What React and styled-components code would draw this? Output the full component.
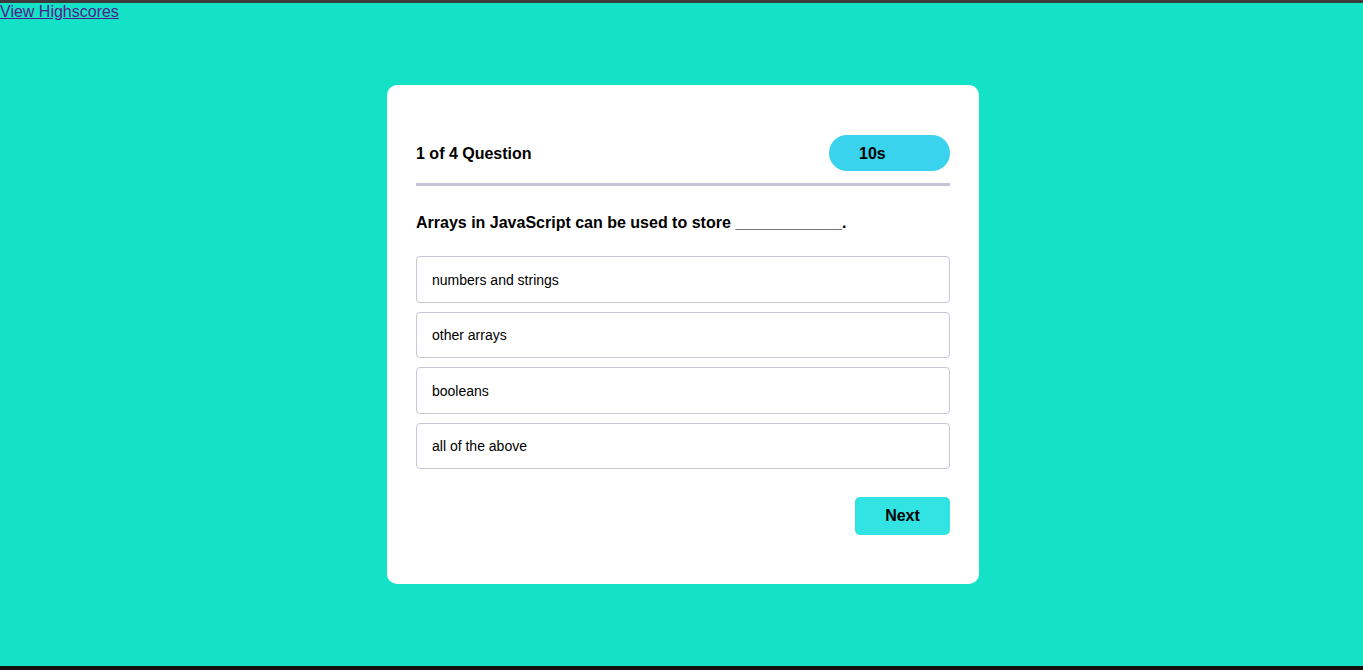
import React, { useState } from 'react';
import styled, { createGlobalStyle } from 'styled-components';

const GlobalStyle = createGlobalStyle`
  html, body {
    margin: 0;
    padding: 0;
  }
  body {
    font-family: 'Liberation Sans', Arial, sans-serif;
    background-color: #13e2c7;
  }
`

const questions = [
  {
    title: 'Arrays in JavaScript can be used to store ____________.',
    choices: ['numbers and strings', 'other arrays', 'booleans', 'all of the above'],
  },
]

export default function App() {
  const [current] = useState(0);
  const q = questions[current];

  return (
    <Page>
      <GlobalStyle />
      <HighscoreLink href="#highscores">View Highscores</HighscoreLink>
      <Card>
        <Header>
          <Counter>{current + 1} of 4 Question</Counter>
          <Timer>10s</Timer>
        </Header>
        <Divider />
        <Question>{q.title}</Question>
        <Choices>
          {q.choices.map(c => (
            <Choice key={c}>{c}</Choice>
          ))}
        </Choices>
        <Footer>
          <NextButton>Next</NextButton>
        </Footer>
      </Card>
    </Page>
  );
}

const Page = styled.div`
  box-sizing: border-box;
  height: 100vh;
  border-top: 3px solid #3b3b3b;
  border-bottom: 4px solid #111;
  background-color: #13e2c7;
  overflow: hidden;
`
const HighscoreLink = styled.a`
  display: inline-block;
  font-size: 16px;
  line-height: 18px;
  color: #551a8b;
  text-decoration: underline;
`
const Card = styled.div`
  box-sizing: border-box;
  width: 592px;
  margin-top: 64px;
  margin-left: calc(50% - 294.5px);
  padding: 50px 29px 49px;
  background-color: white;
  border-radius: 10px;
`
const Header = styled.div`
  display: flex;
  justify-content: space-between;
  align-items: center;
  height: 36px;
`
const Counter = styled.div`
  padding-top: 1px;
  font-size: 16px;
  font-weight: bold;
  color: #000;
`
const Timer = styled.div`
  box-sizing: border-box;
  width: 121px;
  height: 36px;
  padding: 1px 0 0 30px;
  display: flex;
  align-items: center;
  border-radius: 18px;
  background-color: #3ad3ee;
  font-size: 16px;
  font-weight: bold;
  color: #000;
`
const Divider = styled.div`
  height: 3px;
  margin-top: 12px;
  background-color: #c6c3d9;
`
const Question = styled.div`
  margin: 28px 0 24px;
  font-size: 16px;
  line-height: 18px;
  font-weight: bold;
  color: #000;
`
const Choices = styled.div`
  display: flex;
  flex-direction: column;
  gap: 9px;
`
const Choice = styled.div`
  box-sizing: border-box;
  height: 46.5px;
  display: flex;
  align-items: center;
  padding: 1px 0 0 15px;
  border: 1px solid #c8c6d8;
  border-radius: 4px;
  font-size: 14px;
  color: #000;
  cursor: pointer;
`
const Footer = styled.div`
  display: flex;
  justify-content: flex-end;
  margin-top: 28px;
`
const NextButton = styled.button`
  width: 95px;
  height: 38px;
  padding: 0;
  border: none;
  border-radius: 5px;
  background-color: #31e3e3;
  font-family: 'Liberation Sans', Arial, sans-serif;
  font-size: 16px;
  font-weight: bold;
  color: #000;
  cursor: pointer;
`
